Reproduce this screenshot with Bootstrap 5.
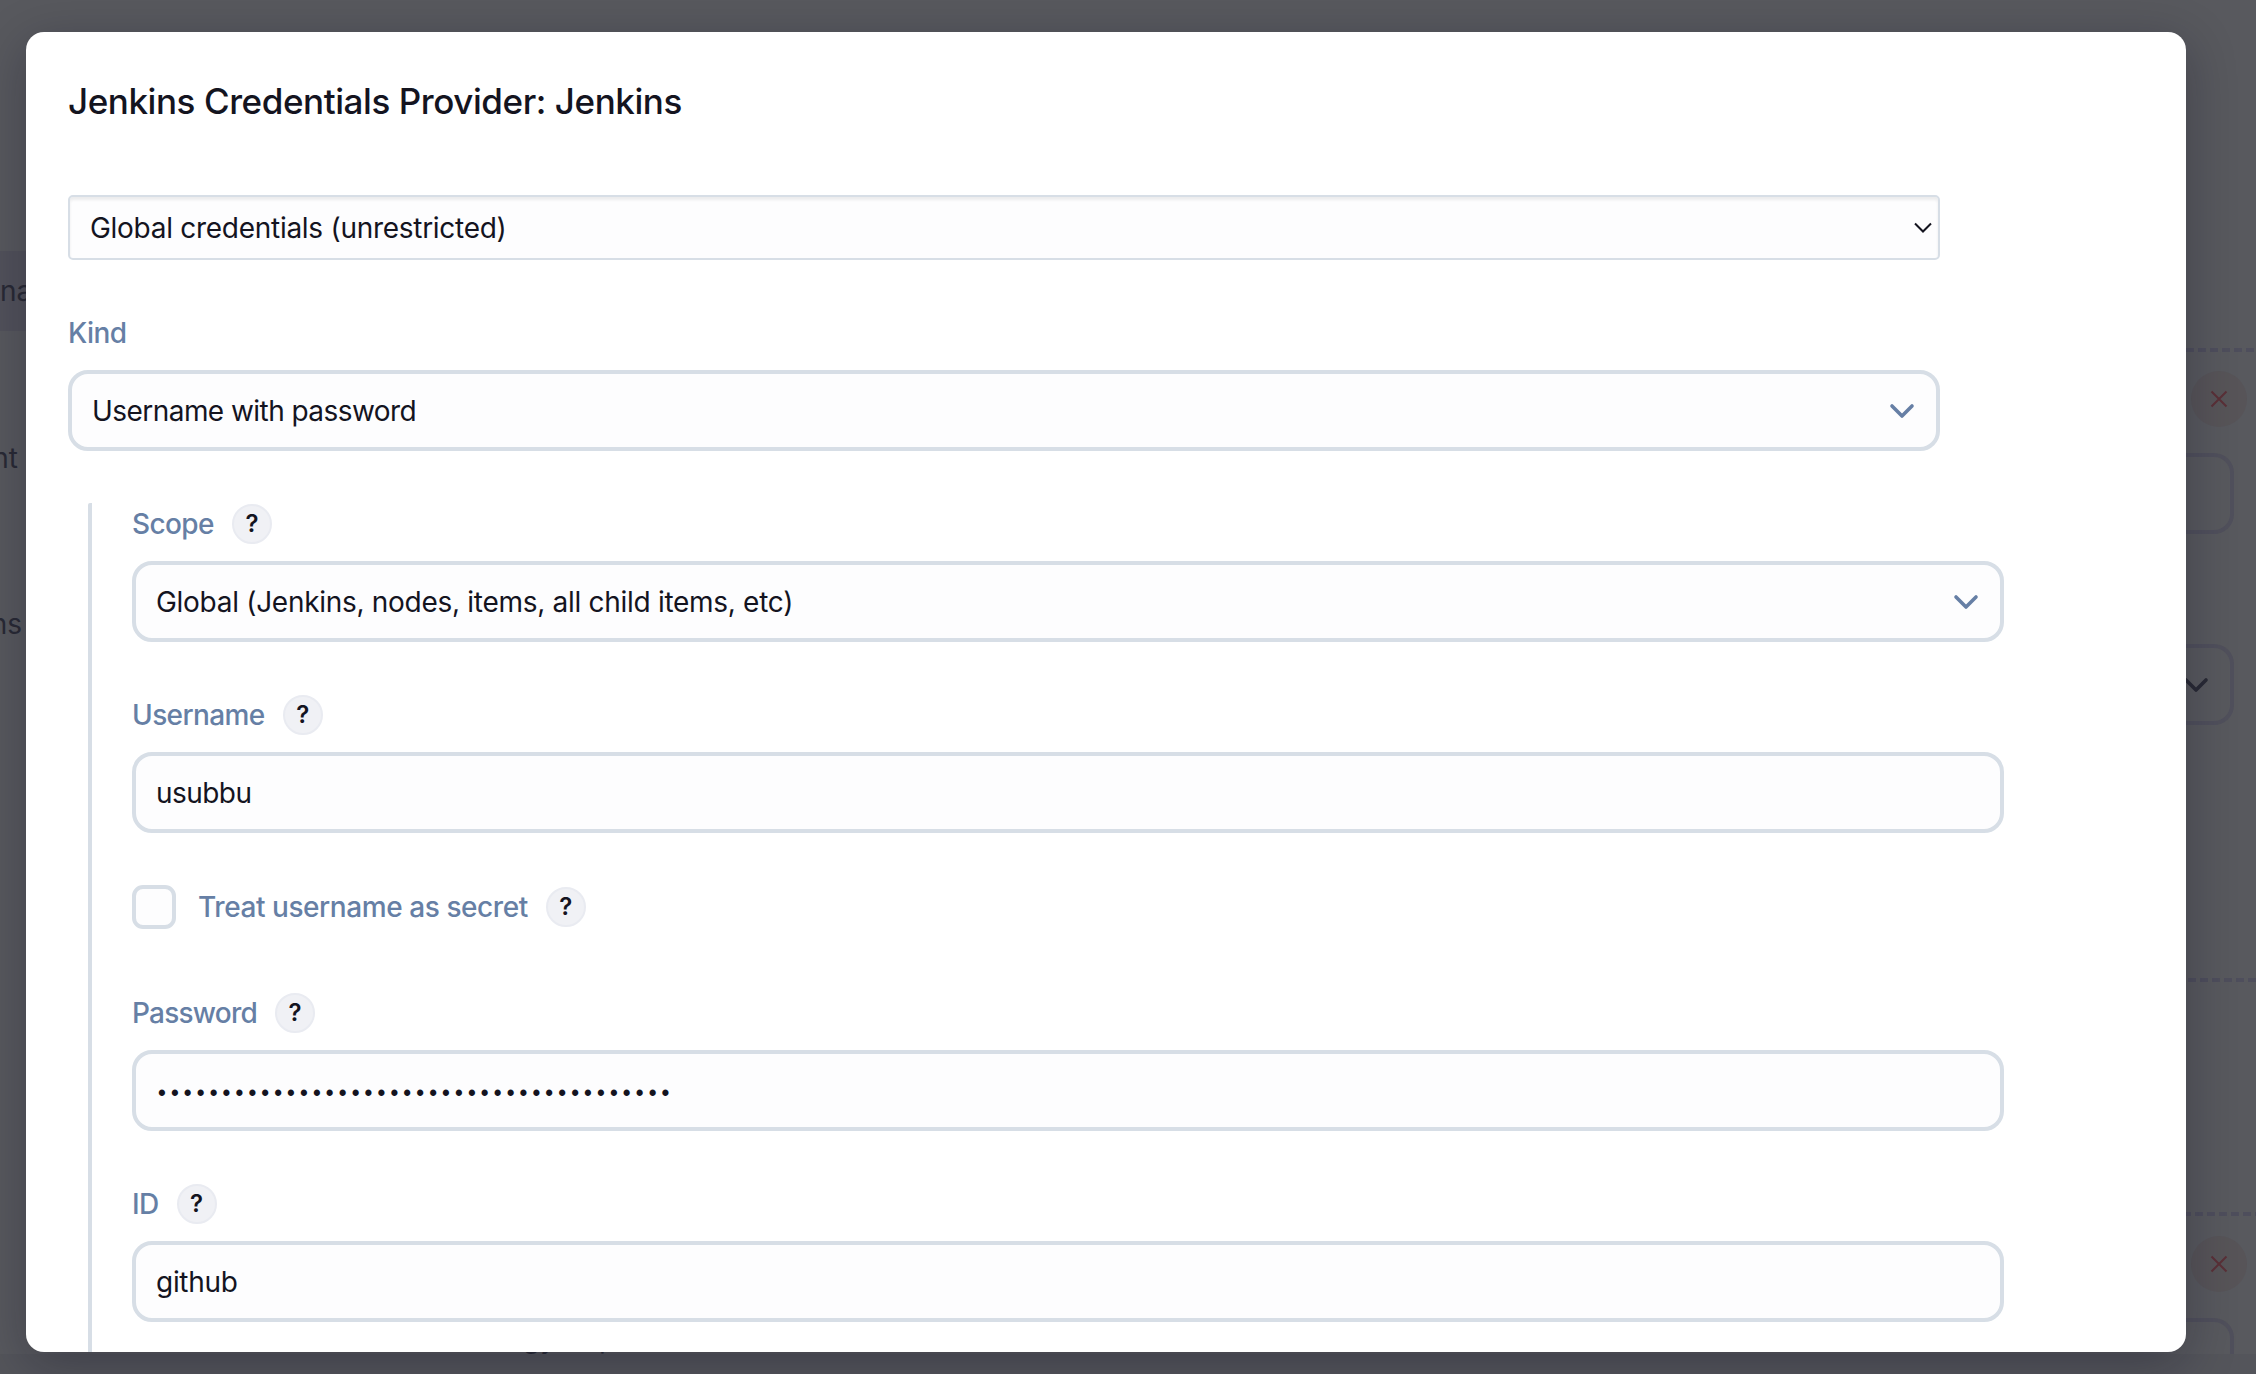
<!DOCTYPE html>
<html lang="en">
<head>
<meta charset="utf-8">
<title>Jenkins Credentials Provider: Jenkins</title>
<link rel="stylesheet" href="https://cdn.jsdelivr.net/npm/bootstrap@5.3.0/dist/css/bootstrap.min.css">
<style>
  html, body { height: 100%; overflow: hidden; }
  body { font-family: Inter, "Liberation Sans", sans-serif; font-size: 28px; line-height: 40px; color: #14141f; background: #58595e; }
  /* dimmed page behind the dialog */
  .page-view { height: 1354px; color: #292a35; }
  .side-strip { width: 26px; }
  .side-tab { height: 80px; margin-top: 251px; background: #52525b; }
  .side-text { height: 40px; direction: rtl; white-space: nowrap; }
  .peek { width: 200px; height: 40px; margin: 674px 0 0 498px; padding-left: 25px; gap: 43px; }
  .right-col { width: 90px; }
  .dash { height: 4px; background: repeating-linear-gradient(90deg, #4e4e5c 0 8px, transparent 8px 12px); }
  .round-x { width: 56px; height: 56px; margin-left: 25px; background: #575458; }
  .dim-field { width: 68px; height: 81px; border: 4px solid #50505c; border-left: 0; border-radius: 0 20px 20px 0; padding-right: 21px; }
  .foot { height: 20px; background: #54555b; }
  /* dialog */
  .dialog-box { position: absolute; left: 26px; top: 32px; width: 2160px; height: 1320px; border-radius: 18px; background: #fff; padding: 49px 42px 0; box-shadow: 0 12px 50px rgba(10,10,30,.3); }
  .dialog-title { font-size: 35px; font-weight: 550; line-height: 40px; letter-spacing: -.43px; margin-bottom: 74px; }
  .w-field { width: 1872px; }
  .plain-select { height: 65px; border: 2px solid #d7dee6; border-radius: 5px; background: #fdfdfe; padding: 0 6px 0 20px; box-shadow: inset 0 3px 3px rgba(0,0,0,.07); letter-spacing: -.28px; }
  .field { width: 1872px; height: 81px; border: 4px solid #d7dee6; border-radius: 20px; background: #fdfdfe; padding: 0 21px 0 20px; letter-spacing: -.29px; }
  .lbl { height: 40px; margin: 53px 0 17px; color: #667fa5; font-weight: 500; gap: 18px; letter-spacing: -.6px; }
  .nested { margin: 52px 0 0 20px; padding: 1px 0 0 40px; border-left: 4px solid #d7dee6; border-top-left-radius: 2px; height: 849px; }
  .nested .lbl:first-child { margin-top: 0; }
  .help { width: 40px; height: 40px; border: 2px solid #e9ebf1; border-radius: 50%; background: #f0f1f5; color: #14141f; font-size: 24px; font-weight: 600; letter-spacing: 0; }
  .check-row { height: 44px; margin: 52px 0 64px; color: #667fa5; font-weight: 500; letter-spacing: -.43px; }
  .check-row + .lbl { margin-top: 0; }
  .tick { width: 44px; height: 44px; border: 4px solid #d7dee6; border-radius: 11px; background: #fdfdfe; margin-right: 22px; }
  .treat { margin-right: 18px; }
  .dots { font-family: "Liberation Mono", monospace; font-size: 23px; letter-spacing: -.89px; padding-top: 8px; margin-left: -1px; }
  .tight { letter-spacing: -.55px; }
  .tighter { letter-spacing: -.78px; }
</style>
</head>
<body>
<div class="page-view d-flex justify-content-between overflow-hidden">
  <div>
    <div class="side-strip">
      <div class="side-tab d-flex align-items-center">nav</div>
      <div class="side-text" style="margin-top:107px;width:18px">nt</div>
      <div class="side-text" style="margin-top:126px;width:22px">ns</div>
    </div>
    <div class="peek d-flex"><span>gy</span><span>p</span></div>
  </div>
  <div class="right-col">
    <div class="dash" style="margin:348px 0 0 20px"></div>
    <div class="round-x rounded-circle d-flex align-items-center justify-content-center" style="margin-top:19px"><svg width="18" height="18" viewBox="0 0 18 18" stroke="#5a3037" stroke-width="2"><path d="M1.5 1.5l15 15M16.5 1.5l-15 15"/></svg></div>
    <div class="dim-field" style="margin-top:26px"></div>
    <div class="dim-field d-flex align-items-center justify-content-end" style="margin-top:110px"><svg width="26" height="16" viewBox="0 0 26 16" fill="none" stroke="#292a35" stroke-width="3.6" stroke-linecap="round" stroke-linejoin="round"><path d="M3 3l10 10L23 3"/></svg></div>
    <div class="dash" style="margin:253px 0 0 22px"></div>
    <div class="dash" style="margin:230px 0 0 17px"></div>
    <div class="round-x rounded-circle d-flex align-items-center justify-content-center" style="margin-top:20px"><svg width="18" height="18" viewBox="0 0 18 18" stroke="#5a3037" stroke-width="2"><path d="M1.5 1.5l15 15M16.5 1.5l-15 15"/></svg></div>
    <div class="dim-field" style="margin-top:26px"></div>
  </div>
</div>
<div class="foot"></div>

<div class="dialog-box overflow-hidden" role="dialog">
  <h1 class="dialog-title">Jenkins Credentials Provider: Jenkins</h1>
  <div class="plain-select w-field d-flex align-items-center justify-content-between"><span>Global credentials (unrestricted)</span>
    <svg width="18" height="12" viewBox="0 0 18 12" fill="none" stroke="#14141f" stroke-width="2"><path d="M1 1.5l8 8 8-8"/></svg></div>
  <div class="lbl d-flex align-items-center"><span>Kind</span></div>
  <div class="field d-flex align-items-center justify-content-between"><span class="tight">Username with password</span>
    <svg width="26" height="16" viewBox="0 0 26 16" fill="none" stroke="#667fa5" stroke-width="3.6" stroke-linecap="round" stroke-linejoin="round"><path d="M3 3l10 10L23 3"/></svg></div>
  <div class="nested">
    <div class="lbl d-flex align-items-center"><span>Scope</span><span class="help d-flex align-items-center justify-content-center">?</span></div>
    <div class="field d-flex align-items-center justify-content-between"><span>Global (Jenkins, nodes, items, all child items, etc)</span>
      <svg width="26" height="16" viewBox="0 0 26 16" fill="none" stroke="#667fa5" stroke-width="3.6" stroke-linecap="round" stroke-linejoin="round"><path d="M3 3l10 10L23 3"/></svg></div>
    <div class="lbl d-flex align-items-center"><span>Username</span><span class="help d-flex align-items-center justify-content-center">?</span></div>
    <div class="field d-flex align-items-center"><span class="tight">usubbu</span></div>
    <div class="check-row d-flex align-items-center"><span class="tick"></span><span class="treat">Treat username as secret</span><span class="help d-flex align-items-center justify-content-center">?</span></div>
    <div class="lbl d-flex align-items-center"><span class="tighter">Password</span><span class="help d-flex align-items-center justify-content-center">?</span></div>
    <div class="field d-flex align-items-center"><span class="dots">••••••••••••••••••••••••••••••••••••••••</span></div>
    <div class="lbl d-flex align-items-center"><span>ID</span><span class="help d-flex align-items-center justify-content-center">?</span></div>
    <div class="field d-flex align-items-center"><span>github</span></div>
  </div>
</div>
<script src="https://cdn.jsdelivr.net/npm/bootstrap@5.3.0/dist/js/bootstrap.bundle.min.js"></script>
</body>
</html>
